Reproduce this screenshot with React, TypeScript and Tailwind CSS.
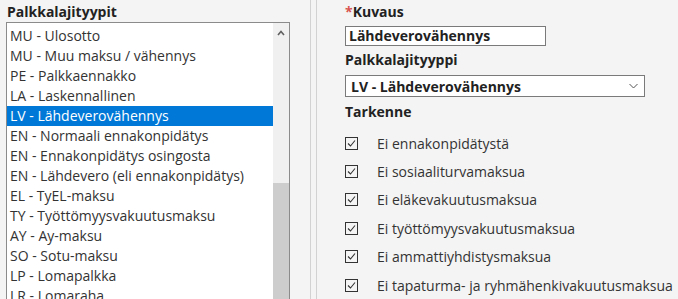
const types = [
  'MU - Ulosotto',
  'MU - Muu maksu / vähennys',
  'PE - Palkkaennakko',
  'LA - Laskennallinen',
  'LV - Lähdeverovähennys',
  'EN - Normaali ennakonpidätys',
  'EN - Ennakonpidätys osingosta',
  'EN - Lähdevero (eli ennakonpidätys)',
  'EL - TyEL-maksu',
  'TY - Työttömyysvakuutusmaksu',
  'AY - Ay-maksu',
  'SO - Sotu-maksu',
  'LP - Lomapalkka',
  'LR - Lomaraha',
]

const options = [
  'Ei ennakonpidätystä',
  'Ei sosiaaliturvamaksua',
  'Ei eläkevakuutusmaksua',
  'Ei työttömyysvakuutusmaksua',
  'Ei ammattiyhdistysmaksua',
  'Ei tapaturma- ja ryhmähenkivakuutusmaksua',
]

function CheckBox() {
  return (
    <div className="w-[13px] h-[13px] border border-[#333] flex items-center justify-center">
      <svg width="11" height="11" viewBox="0 0 11 11" fill="none">
        <polyline points="2,5.5 4.5,8 9,2.5" stroke="#333" strokeWidth="1.1" />
      </svg>
    </div>
  )
}

export default function App() {
  return (
    <div
      className="w-[678px] h-[299px] overflow-hidden bg-[#f4f4f4] flex text-[14px] text-[#333]"
      style={{ fontFamily: '"Open Sans", sans-serif' }}
    >
      {/* left: type list */}
      <div className="w-[311px] shrink-0 border-r border-[#d2d2d2] pl-[6px] pt-[2px]">
        <div className="h-[20px] leading-[20px] font-bold text-[#222] pl-[1px]">Palkkalajityypit</div>
        <div className="w-[284px] h-[300px] border border-[#8b8b8b] bg-white flex">
          <div className="flex-1 pt-[3px]">
            {types.map((t, i) => (
              <div
                key={i}
                className={
                  'h-[20px] leading-[20px] pl-[3px] whitespace-nowrap ' +
                  (i === 4 ? 'bg-[#0078d7] text-white' : '')
                }
              >
                {t}
              </div>
            ))}
          </div>
          <div className="w-[16px] bg-[#f0f0f0] flex flex-col">
            <div className="h-[18px] flex items-center justify-center pt-[2px]">
              <svg width="8" height="6" viewBox="0 0 8 6">
                <polyline points="1,5 4,1.5 7,5" fill="none" stroke="#606060" strokeWidth="1.6" />
              </svg>
            </div>
            <div className="h-[142px]" />
            <div className="flex-1 bg-[#cdcdcd]" />
          </div>
        </div>
      </div>

      {/* right: edit form */}
      <div className="ml-[5px] border-l border-[#d2d2d2] flex-1 pl-[28px] pt-[2px]">
        <div className="h-[20px] leading-[20px] font-bold text-[#222]">
          <span className="text-[#d9534f]">*</span>Kuvaus
        </div>
        <div className="mt-[4px] w-[201px] h-[20px] border border-[#7a7a7a] bg-white leading-[18px] pl-[3px] font-bold text-[#222]">
          Lähdeverovähennys
        </div>
        <div className="mt-[4px] h-[20px] leading-[20px] font-bold text-[#222]">Palkkalajityyppi</div>
        <div className="mt-[5px] w-[300px] h-[22px] border border-[#7a7a7a] bg-white flex items-center justify-between pl-[5px] pr-[6px] font-bold text-[#222]">
          <span>LV - Lähdeverovähennys</span>
          <svg width="9" height="6" viewBox="0 0 9 6">
            <polyline points="0.5,1 4.5,5 8.5,1" fill="none" stroke="#555" strokeWidth="1" />
          </svg>
        </div>
        <div className="mt-[5px] h-[20px] leading-[20px] font-bold text-[#222]">Tarkenne</div>
        <div className="mt-[7px]">
          {options.map((o, i) => (
            <div key={i} className="h-[28.4px] flex items-center">
              <CheckBox />
              <span className="ml-[19px] whitespace-nowrap">{o}</span>
            </div>
          ))}
        </div>
      </div>
    </div>
  )
}
